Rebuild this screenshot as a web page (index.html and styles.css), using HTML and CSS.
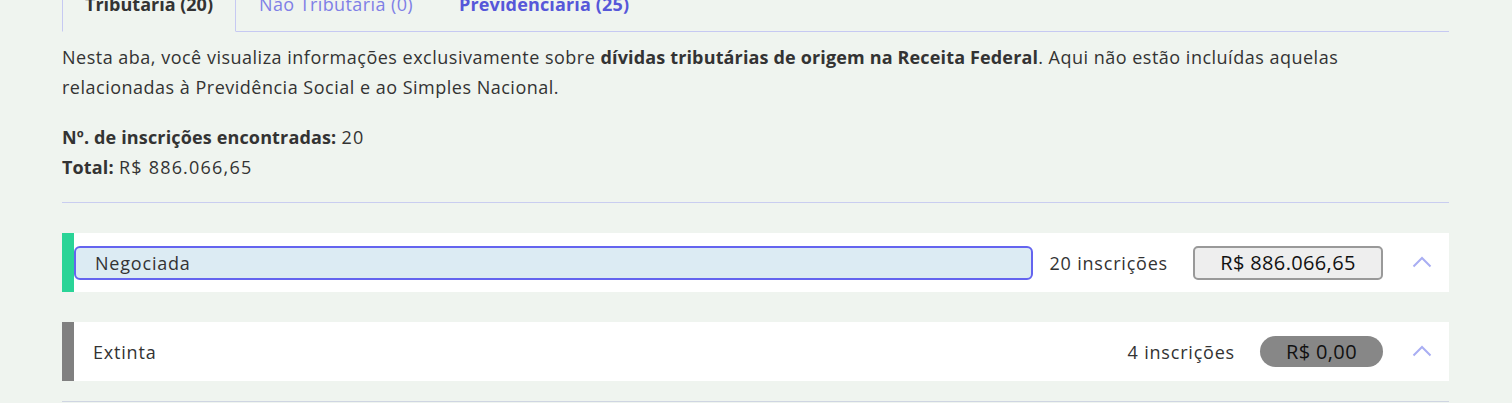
FILE: index.html
```html
<!DOCTYPE html>
<html lang="pt-BR">
<head>
<meta charset="utf-8">
<title>Inscrições</title>
<link rel="stylesheet" href="styles.css">
</head>
<body>
<div class="page">
  <ul class="tabs">
    <li class="tab tab-active">Tributária (20)</li>
    <li class="tab tab-disabled">Não Tributária (0)</li>
    <li class="tab tab-link">Previdenciária (25)</li>
  </ul>
  <p class="desc">Nesta aba, você visualiza informações exclusivamente sobre <strong>dívidas tributárias de origem na Receita Federal</strong>. Aqui não estão incluídas aquelas relacionadas à Previdência Social e ao Simples Nacional.</p>
  <p class="summary"><strong>Nº. de inscrições encontradas:</strong> <span class="num">20</span><br><strong>Total:</strong> <span class="num">R$ 886.066,65</span></p>
  <hr class="sep">
  <div class="group group-green">
    <button class="group-btn group-btn-focus">Negociada</button>
    <span class="count">20 inscrições</span>
    <span class="amount amount-box">R$ 886.066,65</span>
    <span class="chev"><svg width="20" height="12" viewBox="0 0 20 12"><polyline points="1.5,10.5 10,2 18.5,10.5" fill="none" stroke="#a9aef3" stroke-width="2"/></svg></span>
  </div>
  <div class="group group-gray">
    <button class="group-btn">Extinta</button>
    <span class="count">4 inscrições</span>
    <span class="amount amount-pill">R$ 0,00</span>
    <span class="chev"><svg width="20" height="12" viewBox="0 0 20 12"><polyline points="1.5,10.5 10,2 18.5,10.5" fill="none" stroke="#a9aef3" stroke-width="2"/></svg></span>
  </div>
  <div class="bottom-line"></div>
</div>
</body>
</html>
```
FILE: styles.css
```css
html, body {
  margin: 0;
  padding: 0;
  background: #eff4ef;
}
body {
  font-family: "Open Sans", "Lato", sans-serif;
  color: #333333;
  font-size: 18px;
  overflow: hidden;
}
.page {
  margin: -19px 63px 0 62px;
}
.tabs {
  list-style: none;
  margin: 0;
  padding: 0;
  display: flex;
  border-bottom: 1px solid #c6c9f2;
}
.tab {
  padding: 9px 22px 13px;
  line-height: 27px;
  border: 1px solid transparent;
  border-bottom: none;
  margin-bottom: -1px;
  letter-spacing: 0.4px;
}
.tab-active {
  font-weight: 700;
  color: #333333;
  border-color: #c6c9f2;
  background: #eff4ef;
  border-bottom: 1px solid #eff4ef;
  letter-spacing: 0;
}
.tab-disabled {
  color: #7f80e6;
}
.tab-link {
  color: #5657d9;
  font-weight: 700;
  letter-spacing: 0.15px;
}
.desc {
  margin: 10px 0 0;
  line-height: 30px;
  letter-spacing: 0.5px;
}
.summary {
  margin: 20px 0 0;
  line-height: 30px;
  letter-spacing: 0.5px;
}
.desc strong, .summary strong {
  font-weight: 700;
  letter-spacing: 0.15px;
}
.summary .num {
  letter-spacing: 1.2px;
}
.sep {
  border: none;
  border-top: 1px solid #c9cdf0;
  margin: 20px 0 0;
}
.group {
  display: flex;
  align-items: center;
  height: 59px;
  background: #ffffff;
  margin-top: 30px;
  letter-spacing: 0.8px;
}
.group-green { border-left: 12px solid #2ad497; }
.group-gray { border-left: 12px solid #808080; }
.group-btn {
  flex: 1;
  align-self: center;
  height: 34px;
  text-align: left;
  font: inherit;
  letter-spacing: inherit;
  color: #333333;
  background: transparent;
  border: 2px solid transparent;
  border-radius: 6px;
  padding: 0 17px;
  margin-right: 17px;
}
.group-btn-focus {
  border-color: #6464ef;
  background: #dcebf3;
  padding-left: 19px;
}
.count {
  color: #333333;
  white-space: nowrap;
  margin-right: 25px;
}
.amount {
  color: #111111;
  white-space: nowrap;
  display: flex;
  align-items: center;
  justify-content: center;
  font-size: 20px;
  letter-spacing: 0.35px;
}
.amount-box {
  width: 186px;
  height: 30px;
  border: 2px solid #999999;
  border-radius: 5px;
  background: #eeeeee;
}
.amount-pill {
  width: 123px;
  height: 31px;
  border-radius: 16px;
  background: #878787;
}
.chev {
  width: 54px;
  padding-left: 12px;
  display: flex;
  justify-content: center;
  padding-bottom: 2px;
}
.bottom-line {
  margin-top: 20px;
  border-top: 1px solid #cfd5e2;
}
```
